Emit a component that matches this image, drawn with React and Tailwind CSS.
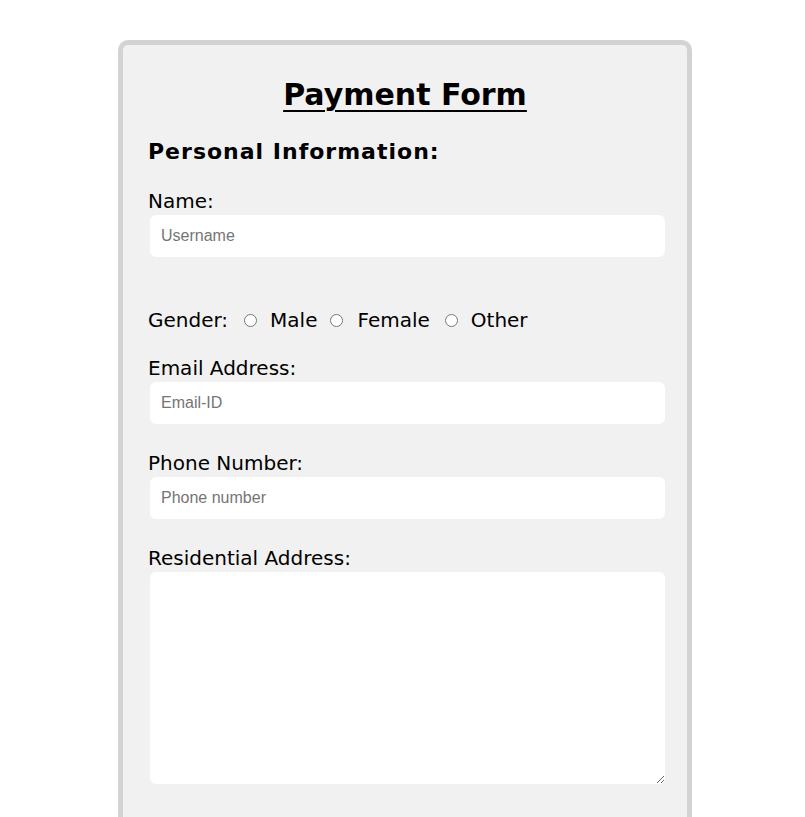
export default function App() {
  return (
    <div className="min-h-screen bg-white pt-[40px] font-['DejaVu_Sans',Verdana,sans-serif] text-black">
      {/* Card */}
      <div className="ml-[118px] w-[574px] rounded-[10px] border-[5px] border-[#d3d3d3] bg-[#f1f1f1] px-[25px] pt-[32px] pb-[60px]">
        <h1 className="text-center text-[30px] font-bold leading-[36px] underline decoration-2 underline-offset-[5px]">
          Payment Form
        </h1>

        <h2 className="mt-[25px] text-[22px] font-bold leading-[28px] tracking-[1px]">Personal Information:</h2>

        {/* Name */}
        <label className="mt-[23px] block text-[20px] leading-[24px]">Name:</label>
        <input
          type="text"
          placeholder="Username"
          className="mt-[2px] ml-[2px] block h-[42px] w-[515px] rounded-[6px] bg-white px-[11px] font-['Liberation_Sans',Arial,sans-serif] text-[16px] outline-none placeholder:text-[#757575]"
        />

        {/* Gender */}
        <div className="mt-[51px] flex h-[24px] items-center text-[20px] leading-[24px]">
          <span>Gender:</span>
          <input type="radio" name="gender" className="ml-[16px] h-[13px] w-[13px]" />
          <span className="ml-[13px]">Male</span>
          <input type="radio" name="gender" className="ml-[13px] h-[13px] w-[13px]" />
          <span className="ml-[14px]">Female</span>
          <input type="radio" name="gender" className="ml-[15px] h-[13px] w-[13px]" />
          <span className="ml-[13px]">Other</span>
        </div>

        {/* Email */}
        <label className="mt-[24px] block text-[20px] leading-[24px]">Email Address:</label>
        <input
          type="email"
          placeholder="Email-ID"
          className="mt-[2px] ml-[2px] block h-[42px] w-[515px] rounded-[6px] bg-white px-[11px] font-['Liberation_Sans',Arial,sans-serif] text-[16px] outline-none placeholder:text-[#757575]"
        />

        {/* Phone */}
        <label className="mt-[27px] block text-[20px] leading-[24px]">Phone Number:</label>
        <input
          type="tel"
          placeholder="Phone number"
          className="mt-[2px] ml-[2px] block h-[42px] w-[515px] rounded-[6px] bg-white px-[11px] font-['Liberation_Sans',Arial,sans-serif] text-[16px] outline-none placeholder:text-[#757575]"
        />

        {/* Address */}
        <label className="mt-[27px] block text-[20px] leading-[24px]">Residential Address:</label>
        <textarea className="mt-[2px] ml-[2px] block h-[212px] w-[515px] resize rounded-[6px] bg-white px-[11px] py-[8px] font-['Liberation_Sans',Arial,sans-serif] text-[16px] outline-none" />
      </div>
    </div>
  );
}
